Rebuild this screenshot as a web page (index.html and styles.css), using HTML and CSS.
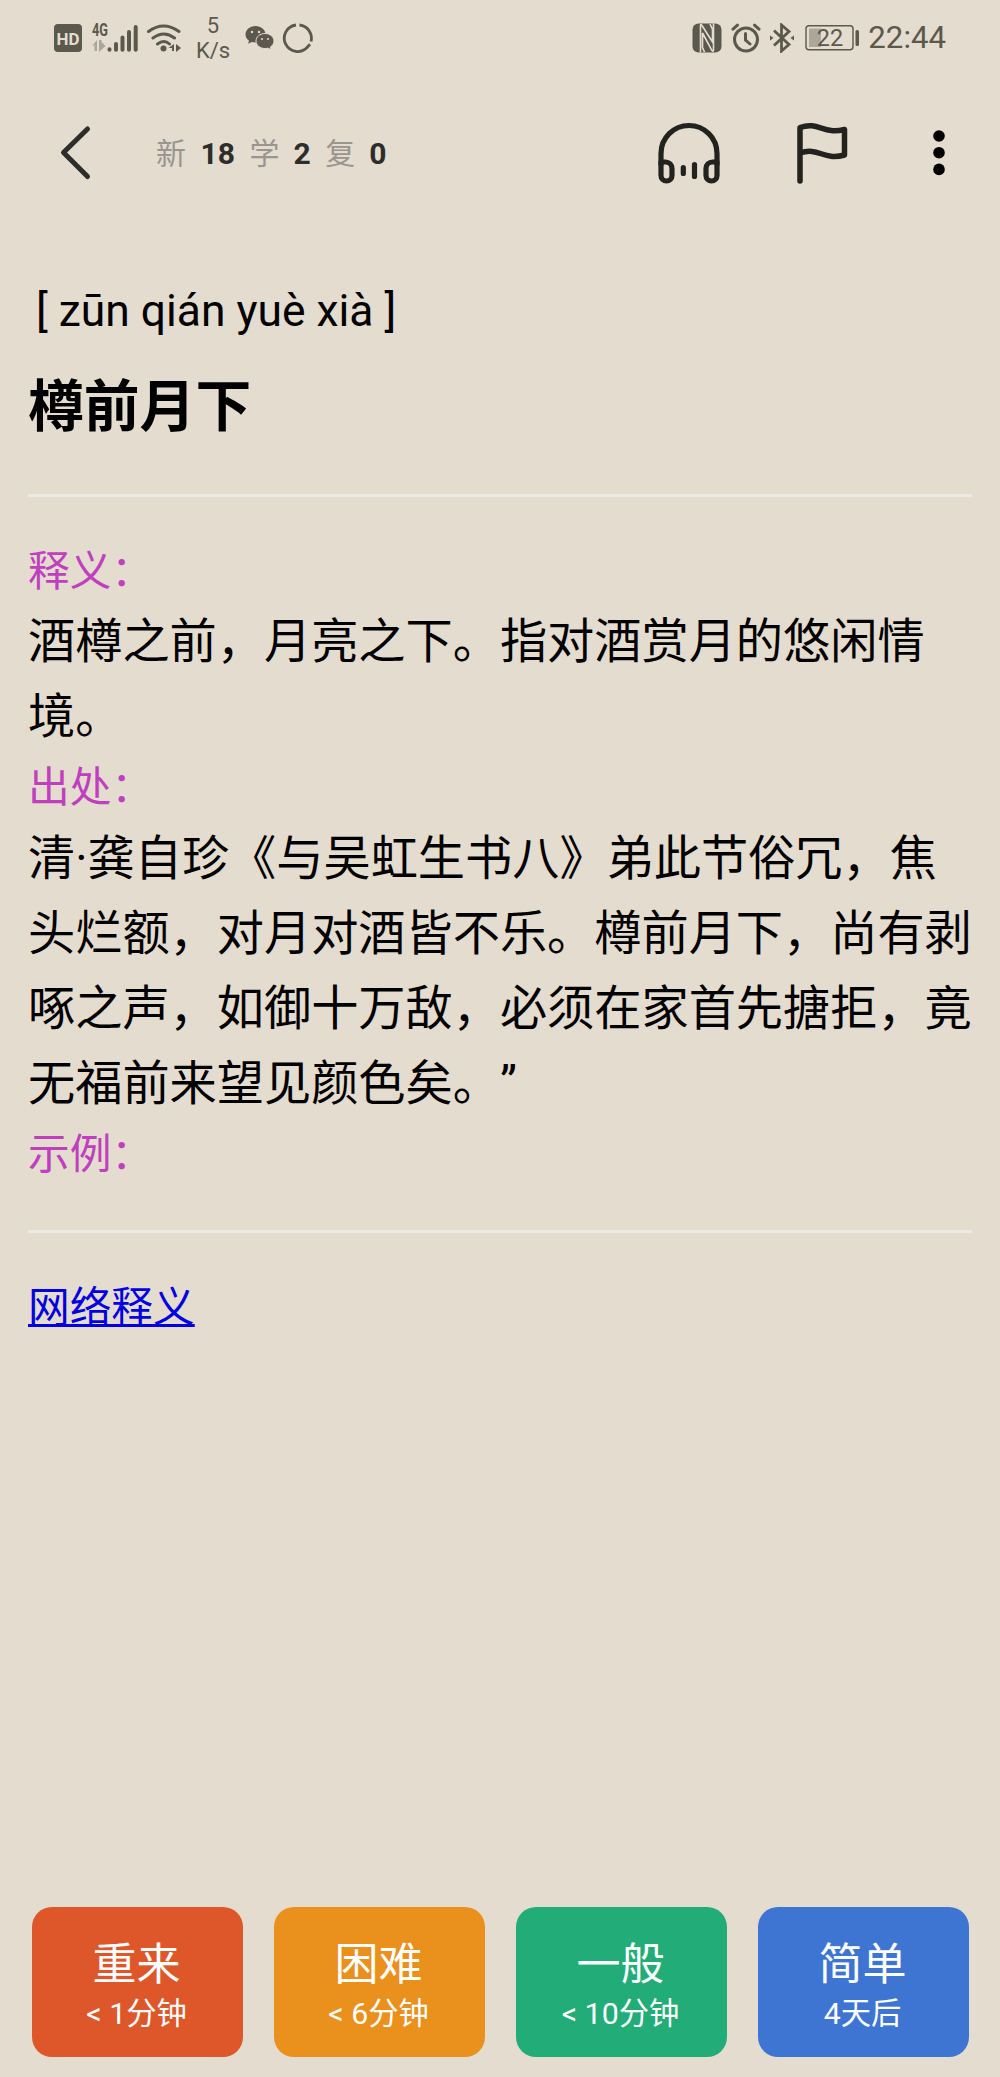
FILE: index.html
```html
<!DOCTYPE html>
<html lang="zh-CN">
<head>
    <meta charset="UTF-8">
    <meta name="viewport" content="width=device-width, initial-scale=1.0">
    <title>樽前月下</title>
    <link rel="stylesheet" href="styles.css">
</head>
<body>

    <!-- status bar -->
    <div class="status">
        <svg class="hd" width="30" height="30" viewBox="0 0 30 30">
            <rect x="1" y="1" width="28" height="28" rx="4" fill="currentColor"/>
            <text class="hd-text" x="15" y="21.500" text-anchor="middle" textLength="23" lengthAdjust="spacingAndGlyphs">HD</text>
        </svg>
        <svg class="signal" width="50" height="40" viewBox="-2 -4 50 40">
            <text class="net-text" x="1" y="13.500" textLength="16" lengthAdjust="spacingAndGlyphs">4G</text>
            <g opacity="0.4" fill="currentColor">
                <path d="M1 24l5-6v11H3.500v-6z"/>
                <path d="M8 18h2.500v2l4 4-6.500 6z"/>
            </g>
            <g stroke="currentColor" stroke-width="4" stroke-linecap="round">
                <path d="M18.500 27.300v.4M25 22v5.700M31.500 15.500v12.200M38 10v17.700M44.700 5v22.700"/>
            </g>
        </svg>
        <svg class="wifi" width="36" height="32" viewBox="0 0 36 32">
            <g fill="none" stroke="currentColor" stroke-width="3" stroke-linecap="round">
                <path d="M2.500 9.500q15-11 30.500 0M7 16q11-8 21.500 0M11.500 22q6.500-5 12 0"/>
            </g>
            <circle cx="17.500" cy="26.500" r="3" fill="currentColor"/>
            <path d="M22.500 26l5.500-4v7h-2v-3zM30 22l5 4-5 4z" fill="currentColor"/>
        </svg>
        <div class="speed"><span>5</span><span>K/s</span></div>
        <svg class="wechat" width="30" height="26" viewBox="0 0 30 26">
            <path d="M10.500 1C4.800 1 .5 4.800.5 9.500c0 2.600 1.300 4.800 3.500 6.300l-.8 3 3.600-1.800c1.100.3 2.400.5 3.700.5 5.600 0 10-3.700 10-8.200S16.100 1 10.500 1z" fill="currentColor"/>
            <path d="M20 8.500c-5 0-9 3.300-9 7.500s4 7.500 9 7.500c1 0 2-.1 3-.4l3.200 1.800-.8-2.800c2.200-1.500 3.600-3.600 3.600-6.100 0-4.200-4-7.500-9-7.500z" fill="currentColor" stroke="#e4dccf" stroke-width="1"/>
            <g fill="#e4dccf">
                <circle cx="7" cy="7" r="1.200"/><circle cx="14" cy="7" r="1.200"/>
                <circle cx="17" cy="14" r="1"/><circle cx="23" cy="14" r="1"/>
            </g>
        </svg>
        <svg class="ring" width="32" height="32" viewBox="0 0 32 32" fill="none" stroke="currentColor" stroke-width="2.800">
            <path d="M17.500 3A13.300 13.300 0 0 1 29 19.500M28 22.300l-2.800 3M25.300 25.300A13.300 13.300 0 1 1 14 3"/>
        </svg>
        <div class="status-right">
            <svg class="nfc" width="30" height="30" viewBox="0 0 30 30">
                <rect x=".5" y=".5" width="29" height="29" rx="6" fill="currentColor"/>
                <path d="M8.500 29.500V2.500c0-1.500 1-1 1.500 0L20.500 19V6.500L18 1M21.500.5v26.500c0 1.500-1 1.500-1.500.5L10.500 10v14.500L12.500 29" fill="none" stroke="#e4dccf" stroke-width="1.600"/>
            </svg>
            <svg class="alarm" width="30" height="30" viewBox="0 0 30 30" fill="none" stroke="currentColor" stroke-width="3" stroke-linecap="round">
                <circle cx="15" cy="16.500" r="11.500"/>
                <path d="M14.500 10.500v6.500l4.500 4M2 6.200l4.500-4M28 6.200l-4.500-4"/>
            </svg>
            <svg class="bt" width="24" height="30" viewBox="0 0 24 30">
                <path d="M4 7.500l15 14-7.500 6.500V2l7.500 6.500-15 14" fill="none" stroke="currentColor" stroke-width="2.800"/>
                <path d="M0 12.500l3.500 2.500L0 17.500zM24 12.500L20.500 15l3.500 2.500z" fill="currentColor"/>
            </svg>
            <svg class="battery" width="55" height="28" viewBox="0 0 55 28">
                <rect x="1" y="1.700" width="47" height="24" rx="3" fill="none" stroke="currentColor" stroke-width="1.400"/>
                <rect x="4" y="4.500" width="12" height="18.500" fill="currentColor" opacity="0.4"/>
                <rect x="50.500" y="6" width="3.500" height="16" rx="1.500" fill="currentColor"/>
                <text class="battery-text" x="25" y="22" text-anchor="middle">22</text>
            </svg>
            <span class="clock">22:44</span>
        </div>
    </div>

    <!-- toolbar -->
    <div class="toolbar">
        <svg class="back" width="34" height="58" viewBox="0 0 34 58" fill="none" stroke="#2d2d2b" stroke-width="5" stroke-linecap="round" stroke-linejoin="round">
            <path d="M29.500 5L5.500 28.500l24 24"/>
        </svg>
        <div class="counts">
            <span>新</span><b>18</b>
            <span>学</span><b>2</b>
            <span>复</span><b>0</b>
        </div>
        <div class="actions">
            <svg class="listen" width="64" height="64" viewBox="0 0 64 64" fill="none" stroke="#22221f" stroke-width="5.200" stroke-linecap="round" stroke-linejoin="round">
                <path d="M4 43V32.500a28 28 0 0 1 56 0V43"/>
                <path d="M4 41h4.500a6.500 6.500 0 0 1 6.500 6.500v7a5.500 5.500 0 0 1-11 0zM60 41h-4.500a6.500 6.500 0 0 0-6.500 6.500v7a5.500 5.500 0 0 0 11 0z"/>
                <path d="M26.300 46.500v6M37.500 43.500v12"/>
            </svg>
            <svg class="flag" width="54" height="64" viewBox="0 0 54 64" fill="none" stroke="#22221f" stroke-width="5.500" stroke-linecap="round" stroke-linejoin="round">
                <path d="M5 60V6.500C24 0 28 14 49.500 8.500V34C28 40 24 25.500 5 32"/>
            </svg>
            <svg class="more" width="12" height="46" viewBox="0 0 12 46">
                <circle cx="6" cy="6" r="5.800"/>
                <circle cx="6" cy="22.700" r="5.800"/>
                <circle cx="6" cy="39.400" r="5.800"/>
            </svg>
        </div>
    </div>

    <!-- card -->
    <div class="card">
        <div class="pinyin">[ zūn qián yuè xià ]</div>
        <h1>樽前月下</h1>
        <hr>
        <div class="label">释义：</div>
        <p>酒樽之前，月亮之下。指对酒赏月的悠闲情境。</p>
        <div class="label">出处：</div>
        <p>清·龚自珍《与吴虹生书八》弟此节俗冗，焦头烂额，对月对酒皆不乐。樽前月下，尚有剥啄之声，如御十万敌，必须在家首先搪拒，竟无福前来望见颜色矣。”</p>
        <div class="label">示例：</div>
        <hr>
        <a class="more-link" href="#">网络释义</a>
    </div>

    <!-- answer buttons -->
    <div class="answers">
        <button class="again"><span>重来</span><small>&lt; 1分钟</small></button>
        <button class="hard"><span>困难</span><small>&lt; 6分钟</small></button>
        <button class="good"><span>一般</span><small>&lt; 10分钟</small></button>
        <button class="easy"><span>简单</span><small>4天后</small></button>
    </div>

</body>
</html>
```
FILE: styles.css
```css
* { box-sizing: border-box; }
body { margin: 0; height: 2077px; display: flex; flex-direction: column; background-color: #e4dccf; color: #000; font-family: Roboto, "Noto Sans CJK SC", sans-serif; text-spacing-trim: space-all; }
svg { display: block; flex: none; }

/* status bar */
.status { display: flex; align-items: center; height: 76px; padding: 0 54px 0 53px; color: #5b584d; }
.signal { margin-left: 6px; }
.wifi { margin-left: 7px; }
.speed { display: flex; flex-direction: column; align-items: center; width: 36px; margin-left: 13px; font-size: 22px; line-height: 25px; }
.wechat { margin-left: 14px; }
.ring { margin-left: 7px; }
.status-right { display: flex; align-items: center; margin-left: auto; }
.alarm { margin-left: 9px; }
.bt { margin-left: 9px; }
.battery { margin-left: 11px; }
.clock { margin-left: 8px; font-size: 31.200px; line-height: 36px; }
.hd-text { font-size: 17px; font-weight: bold; fill: #e4dccf; }
.net-text { font-size: 18px; font-weight: bold; fill: currentColor; }
.battery-text { font-size: 23.500px; fill: currentColor; }

/* toolbar */
.toolbar { display: flex; align-items: center; height: 154px; padding: 0 55px 0 58px; }
.counts { display: flex; align-items: center; margin-left: 64px; padding-top: 2px; font-size: 30px; line-height: 40px; color: #999690; }
.counts b { margin: 0 14.500px; color: #2d2d2b; }
.counts b:nth-of-type(n+2) { margin-left: 14px; }
.actions { display: flex; align-items: center; margin-left: auto; }
.flag { margin-left: 74px; }
.more { margin-left: 84px; }

/* card */
.card { flex: 1; padding: 48px 28px 0 28px; }
.pinyin { padding-left: 8px; font-size: 44.400px; line-height: 67px; }
h1 { margin: 18px 0 42px; font-size: 55.800px; line-height: 89px; }
hr { height: 3px; margin: 0; border: none; background-color: #ece9e4; }
.label { font-size: 41.700px; line-height: 66.600px; color: #c03fbe; }
hr + .label { margin-top: 41.500px; }
p { margin: 0; font-size: 47.200px; line-height: 75.100px; }
.label + hr { margin: 41px 0 42px; }
.more-link { font-size: 41.700px; line-height: 66.600px; color: #0000e0; text-decoration-thickness: 3px; }

/* answer buttons */
.answers { display: grid; grid-template-columns: repeat(4, 1fr); gap: 31px; padding: 0 31.500px 20px; }
button { display: flex; flex-direction: column; align-items: center; height: 150px; padding: 29px 1px 0 0; border: none; border-radius: 20px; color: #fff; font-family: inherit; cursor: pointer; }
button span { font-size: 44px; line-height: 58px; }
button small { font-size: 30.300px; line-height: 40px; }
.again { background-color: #de572b; }
.hard { background-color: #ea901d; }
.good { background-color: #22ac78; }
.easy { background-color: #3e75d3; }
```
